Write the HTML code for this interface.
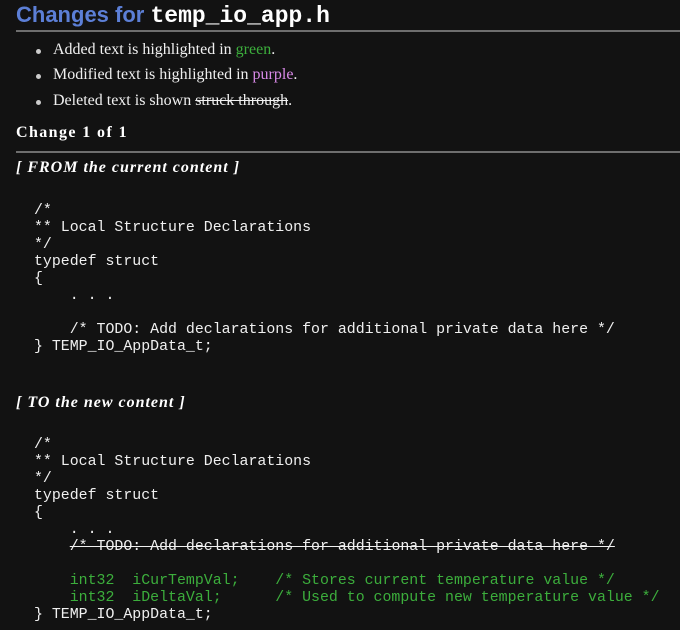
<!DOCTYPE html>
<html><head><meta charset="utf-8"><style>
html,body{margin:0;padding:0;background:#121212;width:680px;height:630px;overflow:hidden;color:#fff;}
.a{position:absolute;white-space:pre;}
h1{position:absolute;left:16px;top:2px;margin:0;font:bold 22px "Liberation Sans",sans-serif;color:#5c7fd6;white-space:pre;}
h1 code{font-family:"Liberation Mono",monospace;color:#fff;font-size:23px;}
.hr{position:absolute;left:16px;right:0;height:2px;background:#6e6e6e;}
.s{font:16px "Liberation Serif",serif;color:#f0f0f0;}
.b{font:bold 16px "Liberation Serif",serif;letter-spacing:1.4px;}
.bi{font:italic bold 16px "Liberation Serif",serif;letter-spacing:1px;}
pre{position:absolute;left:34px;margin:0;font:14.9px/17px "Liberation Mono",monospace;color:#f0f0f0;}
.g{color:#3cae3c}.p{color:#d98ae8}
.dot{position:absolute;left:36px;width:5px;height:5px;border-radius:50%;background:#ccc;}
</style></head><body>
<h1>Changes for <code>temp_io_app.h</code></h1>
<div class="hr" style="top:30px"></div>
<div class="dot" style="top:49px"></div><div class="a s" style="left:53px;top:41px">Added text is highlighted in <span class="g">green</span>.</div>
<div class="dot" style="top:74px"></div><div class="a s" style="left:53px;top:66px">Modified text is highlighted in <span class="p">purple</span>.</div>
<div class="dot" style="top:100px"></div><div class="a s" style="left:53px;top:92px">Deleted text is shown <s>struck through</s>.</div>
<div class="a b" style="left:16px;top:124px">Change 1 of 1</div>
<div class="hr" style="top:151px"></div>
<div class="a bi" style="left:16px;top:159px">[ FROM the current content ]</div>
<pre style="top:203px">/*
** Local Structure Declarations
*/
typedef struct
{
    . . .

    /* TODO: Add declarations for additional private data here */
} TEMP_IO_AppData_t;</pre>
<div class="a bi" style="left:16px;top:394px">[ TO the new content ]</div>
<pre style="top:437px">/*
** Local Structure Declarations
*/
typedef struct
{
    . . .
    <s>/* TODO: Add declarations for additional private data here */</s>

<span class="g">    int32  iCurTempVal;    /* Stores current temperature value */
    int32  iDeltaVal;      /* Used to compute new temperature value */</span>
} TEMP_IO_AppData_t;</pre>
</body></html>
